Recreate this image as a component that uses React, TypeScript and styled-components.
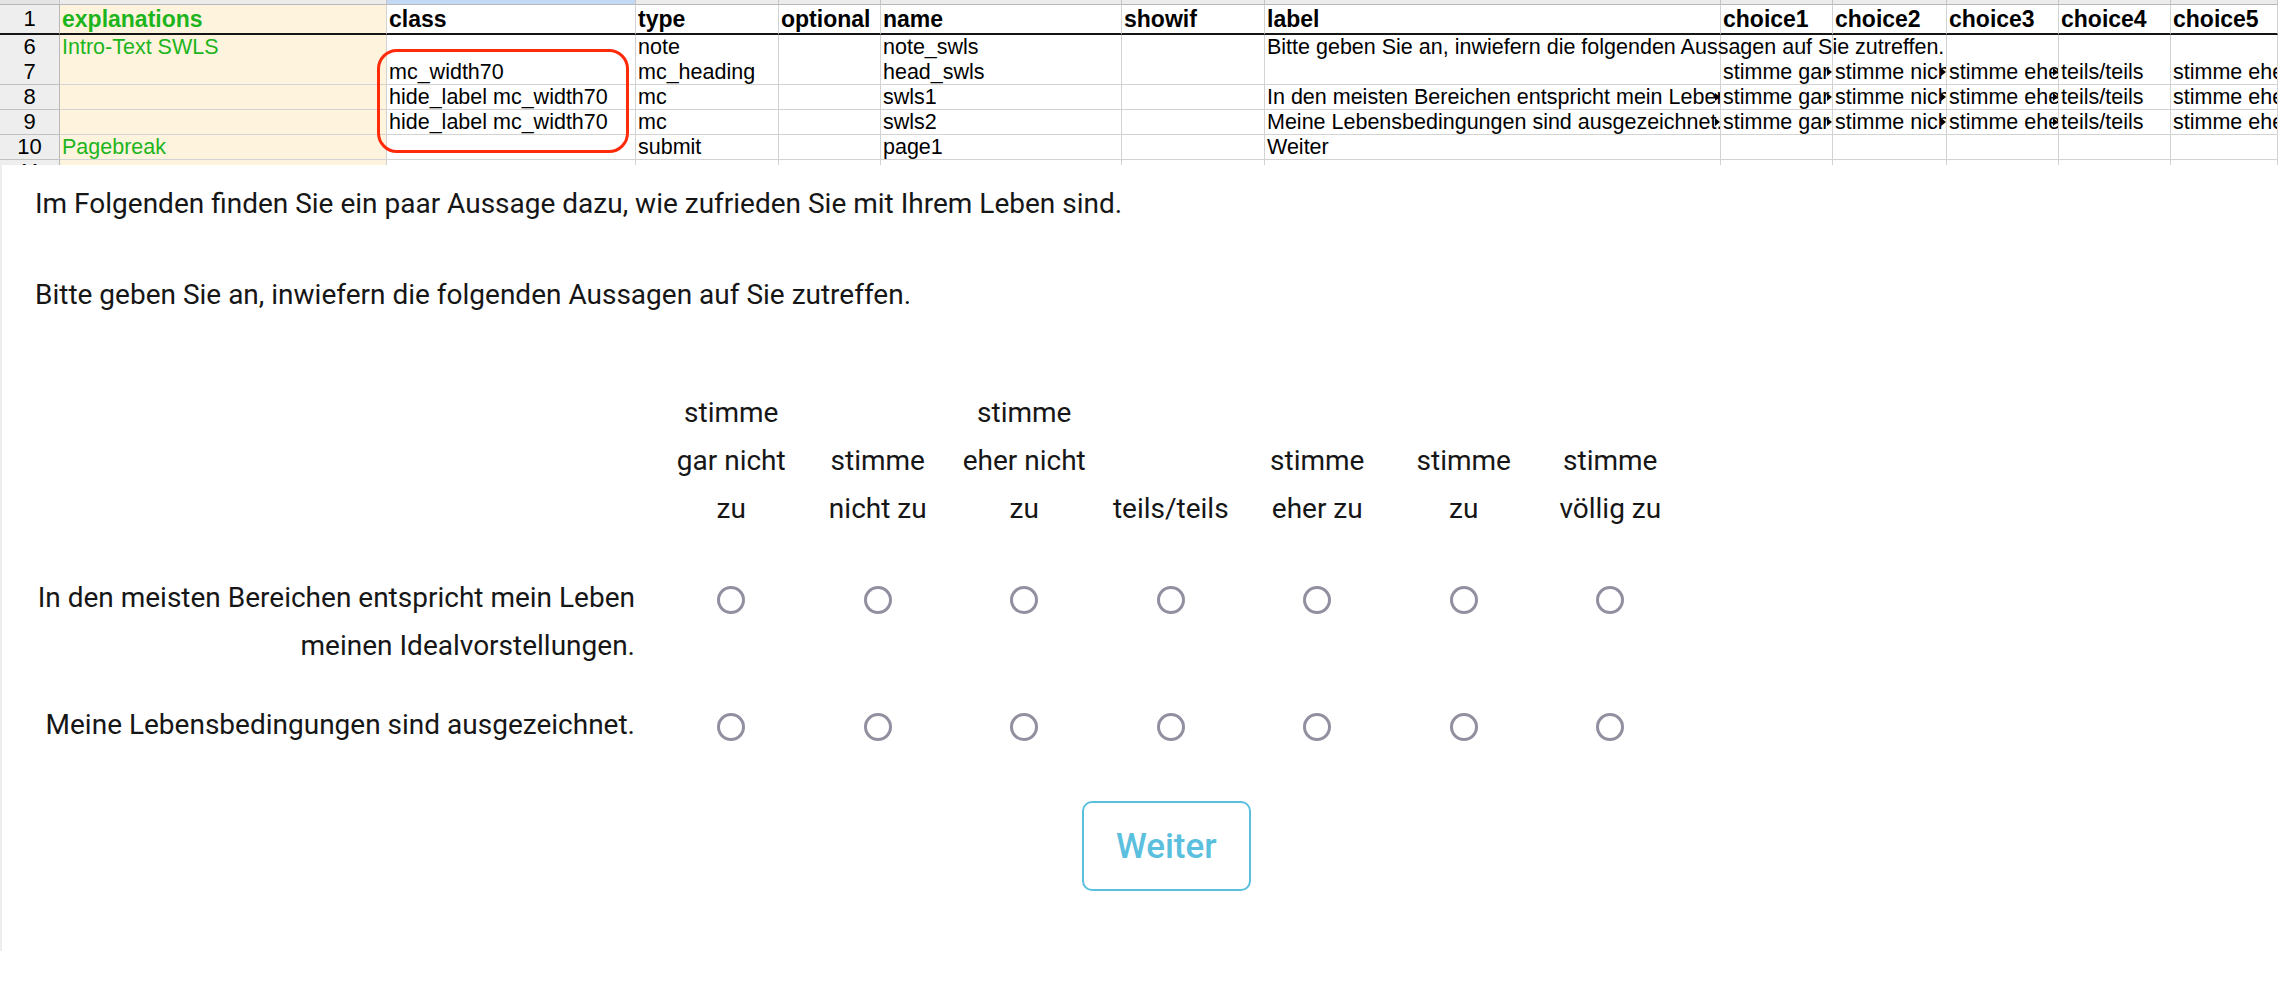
import React from 'react';
import styled, { createGlobalStyle } from 'styled-components';

const GlobalStyle = createGlobalStyle`
  html, body { margin: 0; padding: 0; background: #fff; }
  body { overflow: hidden; }
  * { box-sizing: border-box; }
`;

const COLS = '60px 327px 249px 143px 102px 241px 143px 456px 112px 114px 112px 112px 1fr';

const Sheet = styled.section`
  position: relative;
  width: 100%;
  overflow: hidden;
  font-family: "Liberation Sans", Arial, Helvetica, sans-serif;
  color: #000;
`;

const SheetRow = styled.div<{ $h: number }>`
  display: grid;
  grid-template-columns: ${COLS};
  height: ${(p) => p.$h}px;
  overflow: hidden;
`;

const StripCell = styled.div<{ $active?: boolean; $corner?: boolean }>`
  background: ${(p) => (p.$active ? '#c4daf4' : p.$corner ? '#e4e4e4' : '#ececec')};
  border-right: 1px solid #c6c6c6;
  border-bottom: 1px solid #b8b8b8;
`;

const RowHead = styled.div<{ $thick?: boolean }>`
  background: #eeeeee;
  border-right: 1px solid #b9b9b9;
  border-bottom: ${(p) => (p.$thick ? '2px solid #151515' : '1px solid #c2c2c2')};
  text-align: center;
  font-size: 22px;
  line-height: ${(p) => (p.$thick ? '28px' : '24px')};
  color: #000;
`;

const HeadCell = styled.div<{ $cream?: boolean; $green?: boolean }>`
  padding: 0 2px;
  font-size: 23px;
  font-weight: 700;
  line-height: 28px;
  white-space: nowrap;
  overflow: hidden;
  background: ${(p) => (p.$cream ? '#fef3dc' : '#fff')};
  color: ${(p) => (p.$green ? '#1db51d' : '#000')};
  border-right: 1px solid #d3d3d3;
  border-bottom: 2px solid #151515;
`;

const Cell = styled.div<{ $cream?: boolean; $green?: boolean; $spill?: boolean }>`
  position: relative;
  padding: 0 2px;
  font-size: 21.5px;
  line-height: 25px;
  white-space: nowrap;
  overflow: ${(p) => (p.$spill ? 'visible' : 'hidden')};
  background: ${(p) => (p.$cream ? '#fef3dc' : 'transparent')};
  color: ${(p) => (p.$green ? '#1db51d' : '#000')};
  border-right: 1px solid #d3d3d3;
  border-bottom: 1px solid #d3d3d3;
`;

const Clipped = styled.span`
  position: absolute;
  right: 0;
  top: 50%;
  transform: translateY(-50%);
  width: 0;
  height: 0;
  border-top: 4px solid transparent;
  border-bottom: 4px solid transparent;
  border-left: 5px solid #000;
`;

const Highlight = styled.div`
  position: absolute;
  left: 377px;
  top: 49px;
  width: 252px;
  height: 104px;
  border: 3px solid #ff2a0a;
  border-radius: 20px;
  pointer-events: none;
  z-index: 2;
`;

const Form = styled.main`
  border-left: 2px solid #ededed;
  padding: 15px 0 60px 33px;
  font-family: Roboto, "Liberation Sans", Arial, sans-serif;
  font-size: 28px;
  line-height: 48px;
  color: #161616;
`;

const Para = styled.p<{ $mb: number }>`
  margin: 0 0 ${(p) => p.$mb}px;
`;

const McRow = styled.div<{ $pb?: number; $mt?: number }>`
  display: grid;
  grid-template-columns: 623px repeat(7, 146.5px);
  padding-bottom: ${(p) => p.$pb ?? 0}px;
  margin-top: ${(p) => p.$mt ?? 0}px;
`;

const ChoiceHead = styled.div`
  display: flex;
  flex-direction: column;
  justify-content: flex-end;
  align-items: center;
  text-align: center;
  white-space: nowrap;
`;

const ItemLabel = styled.div`
  text-align: right;
  padding-right: 23px;
`;

const RadioCell = styled.label`
  display: flex;
  justify-content: center;
  align-items: flex-start;
  padding-top: 12px;
`;

const Radio = styled.input`
  appearance: none;
  -webkit-appearance: none;
  margin: 0;
  width: 28px;
  height: 28px;
  border: 3px solid #918fa0;
  border-radius: 50%;
  background: #fff;
`;

const ButtonCell = styled.div`
  grid-column: 2 / span 7;
  display: flex;
  justify-content: center;
  padding-right: 9px;
`;

const SubmitButton = styled.button`
  width: 169px;
  height: 90px;
  border: 2px solid #5bc0de;
  border-radius: 10px;
  background: #fff;
  color: #5bc0de;
  font-family: Roboto, "Liberation Sans", Arial, sans-serif;
  font-size: 35px;
  font-weight: 500;
  padding: 0;
`;

type CellData = { text?: string; clip?: boolean; spill?: boolean };

const headers = ['explanations', 'class', 'type', 'optional', 'name', 'showif', 'label', 'choice1', 'choice2', 'choice3', 'choice4', 'choice5'];

const choiceCells: CellData[] = [
  { text: 'stimme gar nicht zu', clip: true },
  { text: 'stimme nicht zu', clip: true },
  { text: 'stimme eher nicht zu', clip: true },
  { text: 'teils/teils' },
  { text: 'stimme eher zu' },
];
const emptyChoices: CellData[] = [{}, {}, {}, {}, {}];

const rows: { num: string; cells: CellData[] }[] = [
  {
    num: '6',
    cells: [
      { text: 'Intro-Text SWLS' },
      {},
      { text: 'note' },
      {},
      { text: 'note_swls' },
      {},
      { text: 'Bitte geben Sie an, inwiefern die folgenden Aussagen auf Sie zutreffen.', spill: true },
      ...emptyChoices,
    ],
  },
  {
    num: '7',
    cells: [{}, { text: 'mc_width70' }, { text: 'mc_heading' }, {}, { text: 'head_swls' }, {}, {}, ...choiceCells],
  },
  {
    num: '8',
    cells: [
      {},
      { text: 'hide_label mc_width70' },
      { text: 'mc' },
      {},
      { text: 'swls1' },
      {},
      { text: 'In den meisten Bereichen entspricht mein Leben meinen Idealvorstellungen.', clip: true },
      ...choiceCells,
    ],
  },
  {
    num: '9',
    cells: [
      {},
      { text: 'hide_label mc_width70' },
      { text: 'mc' },
      {},
      { text: 'swls2' },
      {},
      { text: 'Meine Lebensbedingungen sind ausgezeichnet.', clip: true },
      ...choiceCells,
    ],
  },
  {
    num: '10',
    cells: [
      { text: 'Pagebreak' },
      {},
      { text: 'submit' },
      {},
      { text: 'page1' },
      {},
      { text: 'Weiter' },
      ...emptyChoices,
    ],
  },
  { num: '11', cells: [{}, {}, {}, {}, {}, {}, {}, ...emptyChoices] },
];

const choiceLabels: string[][] = [
  ['stimme', 'gar nicht', 'zu'],
  ['stimme', 'nicht zu'],
  ['stimme', 'eher nicht', 'zu'],
  ['teils/teils'],
  ['stimme', 'eher zu'],
  ['stimme', 'zu'],
  ['stimme', 'völlig zu'],
];

const items = [
  { id: 'swls1', label: 'In den meisten Bereichen entspricht mein Leben meinen Idealvorstellungen.', pb: 31 },
  { id: 'swls2', label: 'Meine Lebensbedingungen sind ausgezeichnet.', pb: 0 },
];

function Spreadsheet() {
  return (
    <Sheet>
      <SheetRow $h={5}>
        <StripCell $corner />
        {headers.map((h) => (
          <StripCell key={h} $active={h === 'class'} />
        ))}
      </SheetRow>
      <SheetRow $h={30}>
        <RowHead $thick>1</RowHead>
        {headers.map((h, i) => (
          <HeadCell key={h} $cream={i === 0} $green={i === 0}>
            {h}
          </HeadCell>
        ))}
      </SheetRow>
      {rows.map((r) => (
        <SheetRow key={r.num} $h={r.num === '11' ? 5 : 25}>
          <RowHead>{r.num}</RowHead>
          {r.cells.map((c, i) => (
            <Cell key={i} $cream={i === 0} $green={i === 0} $spill={c.spill}>
              {c.text}
              {c.clip && <Clipped />}
            </Cell>
          ))}
        </SheetRow>
      ))}
      <Highlight />
    </Sheet>
  );
}

function Survey() {
  return (
    <Form>
      <Para $mb={43}>Im Folgenden finden Sie ein paar Aussage dazu, wie zufrieden Sie mit Ihrem Leben sind.</Para>
      <Para $mb={70}>Bitte geben Sie an, inwiefern die folgenden Aussagen auf Sie zutreffen.</Para>
      <McRow $pb={41}>
        <div />
        {choiceLabels.map((lines, i) => (
          <ChoiceHead key={i}>
            {lines.map((l) => (
              <span key={l}>{l}</span>
            ))}
          </ChoiceHead>
        ))}
      </McRow>
      {items.map((it) => (
        <McRow key={it.id} $pb={it.pb}>
          <ItemLabel>{it.label}</ItemLabel>
          {choiceLabels.map((_, i) => (
            <RadioCell key={i}>
              <Radio type="radio" name={it.id} value={String(i + 1)} />
            </RadioCell>
          ))}
        </McRow>
      ))}
      <McRow $mt={52}>
        <div />
        <ButtonCell>
          <SubmitButton type="submit">Weiter</SubmitButton>
        </ButtonCell>
      </McRow>
    </Form>
  );
}

export default function App() {
  return (
    <>
      <GlobalStyle />
      <Spreadsheet />
      <Survey />
    </>
  );
}
